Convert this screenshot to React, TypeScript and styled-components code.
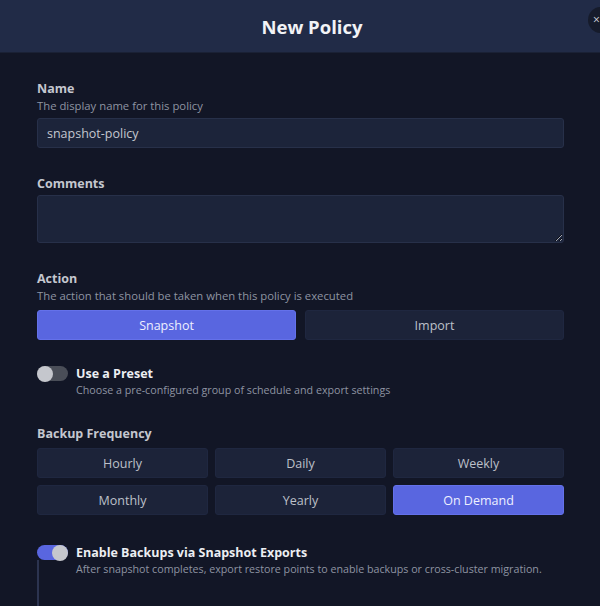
import styled, { createGlobalStyle } from "styled-components";

const GlobalStyle = createGlobalStyle`
  html, body {
    margin: 0;
    padding: 0;
    background: #121626;
  }
  body {
    font-family: "Open Sans", "Noto Sans", sans-serif;
    -webkit-font-smoothing: antialiased;
  }
`;

const actions = ["Snapshot", "Import"];
const frequencies = ["Hourly", "Daily", "Weekly", "Monthly", "Yearly", "On Demand"];

export default function App() {
  const action = "Snapshot";
  const frequency = "On Demand";

  return (
    <>
      <GlobalStyle />
      <Modal>
        <Header>
          <Title>New Policy</Title>
          <CloseButton>×</CloseButton>
        </Header>
        <Body>
          <Field>
            <Label>Name</Label>
            <Description>The display name for this policy</Description>
            <Input defaultValue="snapshot-policy" />
          </Field>

          <Field>
            <Label>Comments</Label>
            <TextArea />
          </Field>

          <Field>
            <Label>Action</Label>
            <Description>
              The action that should be taken when this policy is executed
            </Description>
            <Choices $columns={2} $gap={9}>
              {actions.map((a) => (
                <Choice key={a} $active={a === action}>
                  {a}
                </Choice>
              ))}
            </Choices>
          </Field>

          <ToggleRow $shift={-2}>
            <Toggle $on={false} />
            <ToggleText>
              <ToggleTitle>Use a Preset</ToggleTitle>
              <ToggleDesc>
                Choose a pre-configured group of schedule and export settings
              </ToggleDesc>
            </ToggleText>
          </ToggleRow>

          <Field>
            <Label>Backup Frequency</Label>
            <Choices $columns={3} $gap={7}>
              {frequencies.map((f) => (
                <Choice key={f} $active={f === frequency}>
                  {f}
                </Choice>
              ))}
            </Choices>
          </Field>

          <ToggleRow $shift={2}>
            <ToggleColumn>
              <Toggle $on={true} />
              <Rail />
            </ToggleColumn>
            <ToggleText>
              <ToggleTitle>Enable Backups via Snapshot Exports</ToggleTitle>
              <ToggleDesc>
                After snapshot completes, export restore points to enable
                backups or cross-cluster migration.
              </ToggleDesc>
            </ToggleText>
          </ToggleRow>
        </Body>
      </Modal>
    </>
  );
}

const Modal = styled.div`
  width: 600px;
  height: 606px;
  overflow: hidden;
  background: #121626;
  display: flex;
  flex-direction: column;
`;

const Header = styled.div`
  position: relative;
  height: 53px;
  flex-shrink: 0;
  display: flex;
  align-items: center;
  justify-content: center;
  padding-left: 24px;
  background: #212b47;
  border-bottom: 1px solid #1a2135;
  box-sizing: border-box;
`;

const Title = styled.h1`
  margin: 0;
  font-size: 18.5px;
  font-weight: 700;
  color: #f2f3f6;
`;

const CloseButton = styled.div`
  position: absolute;
  right: -14px;
  top: 7px;
  width: 26px;
  height: 26px;
  box-sizing: border-box;
  padding-left: 5px;
  border-radius: 50%;
  background: #161b2b;
  color: #d0d3da;
  font-size: 12px;
  line-height: 26px;
`;

const Body = styled.div`
  padding: 27px 36px 0 37px;
  display: flex;
  flex-direction: column;
  gap: 27px;
`;

const Field = styled.div`
  display: flex;
  flex-direction: column;
`;

const Label = styled.div`
  font-size: 12.5px;
  font-weight: 700;
  line-height: 17px;
  color: #c4c7cf;
`;

const Description = styled.div`
  font-size: 11.3px;
  line-height: 16px;
  margin-top: 1px;
  color: #8e94a2;
`;

const Input = styled.input`
  height: 30px;
  margin-top: 4px;
  box-sizing: border-box;
  background: #1c243a;
  border: 1px solid #273049;
  border-radius: 3px;
  padding: 0 9px;
  font-family: inherit;
  font-size: 12.5px;
  color: #c4c7cf;
  outline: none;
`;

const TextArea = styled.textarea`
  height: 48px;
  margin-top: 3px;
  box-sizing: border-box;
  background: #1c243a;
  border: 1px solid #273049;
  border-radius: 3px;
  padding: 6px 9px;
  font-family: inherit;
  font-size: 12.5px;
  color: #c4c7cf;
  outline: none;
  resize: vertical;
`;

const Choices = styled.div<{ $columns: number; $gap: number }>`
  display: grid;
  grid-template-columns: repeat(${(p) => p.$columns}, 1fr);
  gap: 7px ${(p) => p.$gap}px;
  margin-top: 6px;
`;

const Choice = styled.div<{ $active: boolean }>`
  height: 30px;
  display: flex;
  align-items: center;
  justify-content: center;
  border-radius: 3px;
  font-size: 12.5px;
  color: ${(p) => (p.$active ? "#eef0ff" : "#bcc0c9")};
  background: ${(p) => (p.$active ? "#5966e0" : "#1c2339")};
  border: 1px solid ${(p) => (p.$active ? "#6471ea" : "#1f2740")};
  box-sizing: border-box;
`;

const ToggleRow = styled.div<{ $shift: number }>`
  display: flex;
  align-items: flex-start;
  gap: 8px;
  margin-top: ${(p) => p.$shift}px;
`;

const ToggleColumn = styled.div`
  display: flex;
  flex-direction: column;
  align-self: stretch;
  min-height: 70px;
`;

const Toggle = styled.div<{ $on: boolean }>`
  position: relative;
  width: 31px;
  height: 15px;
  margin-top: 1px;
  border-radius: 8px;
  background: ${(p) => (p.$on ? "#5966e0" : "#4a4e58")};
  flex-shrink: 0;

  &::after {
    content: "";
    position: absolute;
    top: -0.5px;
    left: ${(p) => (p.$on ? "15px" : "0")};
    width: 16px;
    height: 16px;
    border-radius: 50%;
    background: #c5c7cd;
  }
`;

const Rail = styled.div`
  width: 2px;
  flex: 1;
  background: #2c3450;
`;

const ToggleText = styled.div`
  display: flex;
  flex-direction: column;
`;

const ToggleTitle = styled.div`
  font-size: 12.5px;
  font-weight: 700;
  line-height: 17px;
  color: #eceef2;
`;

const ToggleDesc = styled.div`
  font-size: 10.7px;
  line-height: 16px;
  color: #8e94a2;
`;
